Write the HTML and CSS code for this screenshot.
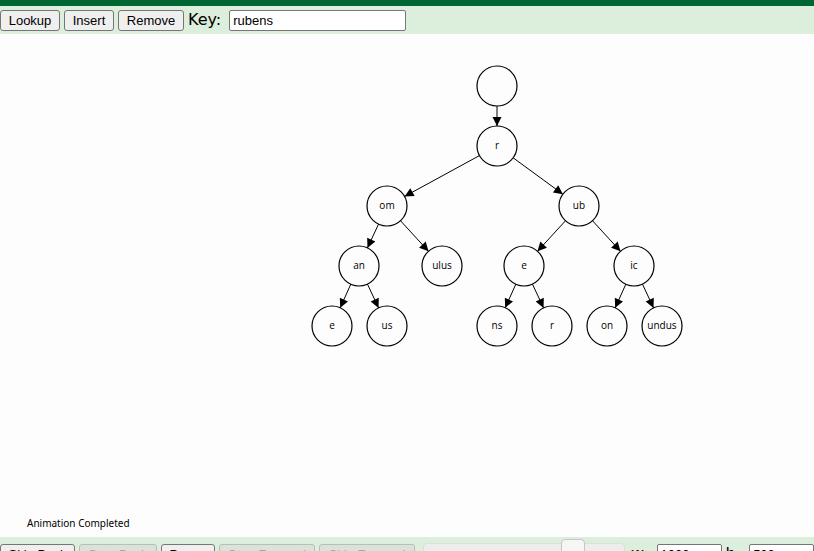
FILE: index.html
```html
<!DOCTYPE html>
<html lang="en">
<head>
<meta charset="utf-8">
<title>Radix Tree Visualization</title>
<link rel="stylesheet" href="styles.css">
</head>
<body>
<header class="bar bar-top">
  <button class="btn lookup" type="button">Lookup</button>
  <button class="btn insert" type="button">Insert</button>
  <button class="btn remove" type="button">Remove</button>
  <label for="key">Key:</label>
  <input class="field key" id="key" type="text" value="rubens">
</header>
<main class="stage">
  <svg class="canvas" width="1000" height="503" viewBox="0 34 1000 503" role="img" aria-label="Radix tree">
    <defs>
      <marker id="arrow" markerUnits="userSpaceOnUse" markerWidth="10" markerHeight="10" overflow="visible" orient="auto">
        <path d="M-20 0L-29-4.5V4.5Z"/>
      </marker>
    </defs>
    <g class="edges">
      <path d="M497 86V146"/>
      <path d="M497 146L387 206"/>
      <path d="M497 146L579 206"/>
      <path d="M387 206L359 266"/>
      <path d="M387 206L442 266"/>
      <path d="M579 206L524 266"/>
      <path d="M579 206L634 266"/>
      <path d="M359 266L332 326"/>
      <path d="M359 266L387 326"/>
      <path d="M524 266L497 326"/>
      <path d="M524 266L552 326"/>
      <path d="M634 266L607 326"/>
      <path d="M634 266L662 326"/>
    </g>
    <g class="nodes">
      <circle cx="497" cy="86" r="20"/>
      <circle cx="497" cy="146" r="20"/><text x="497" y="149">r</text>
      <circle cx="387" cy="206" r="20"/><text x="387" y="209">om</text>
      <circle cx="579" cy="206" r="20"/><text x="579" y="209">ub</text>
      <circle cx="359" cy="266" r="20"/><text x="359" y="269">an</text>
      <circle cx="442" cy="266" r="20"/><text x="442" y="269">ulus</text>
      <circle cx="524" cy="266" r="20"/><text x="524" y="269">e</text>
      <circle cx="634" cy="266" r="20"/><text x="634" y="269">ic</text>
      <circle cx="332" cy="326" r="20"/><text x="332" y="329">e</text>
      <circle cx="387" cy="326" r="20"/><text x="387" y="329">us</text>
      <circle cx="497" cy="326" r="20"/><text x="497" y="329">ns</text>
      <circle cx="552" cy="326" r="20"/><text x="552" y="329">r</text>
      <circle cx="607" cy="326" r="20"/><text x="607" y="329">on</text>
      <circle cx="662" cy="326" r="20"/><text x="662" y="329">undus</text>
    </g>
    <text class="status" x="27" y="527">Animation Completed</text>
  </svg>
</main>
<footer class="bar bar-bottom">
  <button class="btn skip-back" type="button">Skip Back</button>
  <button class="btn step-back" type="button" disabled>Step Back</button>
  <button class="btn pause" type="button">Pause</button>
  <button class="btn forward" type="button" disabled>Step Forward</button>
  <button class="btn forward" type="button" disabled>Skip Forward</button>
  <input class="speed" type="range" min="0" max="100" value="78" aria-label="Animation Speed">
  <label for="w">w:</label>
  <input class="field size" id="w" type="text" value="1000">
  <label for="h">h:</label>
  <input class="field size" id="h" type="text" value="500">
</footer>
</body>
</html>
```
FILE: styles.css
```css
* {
  box-sizing: border-box;
}

body {
  margin: 0;
  height: 100vh;
  overflow: hidden;
  background: #fdfdfd;
  color: #000;
  font: 16px/19px "DejaVu Sans", Verdana, sans-serif;
}

.bar {
  display: flex;
  align-items: center;
  gap: 4px;
  background: #dceedc;
}

.bar-top {
  border-top: 6px solid #006633;
  padding: 4px 0 3px;
}

.bar-bottom {
  padding: 7px 0;
}

label {
  padding: 0 4px 2px 0;
}

.btn {
  flex: none;
  height: 21px;
  padding: 0;
  border: 1px solid #767676;
  border-radius: 3px;
  background: #efefef;
  color: #000;
  font: 13px/15px "Liberation Sans", Arial, sans-serif;
}

.btn:disabled {
  border-color: #b6c0b6;
  background: #dae2da;
  color: #a2aaa2;
}

.lookup { width: 60px; }
.insert { width: 50px; }
.remove { width: 66px; }
.skip-back { width: 75px; }
.step-back { width: 78px; }
.pause { width: 54px; }
.forward { width: 96px; }

.field {
  flex: none;
  height: 21px;
  padding: 1px 3px;
  border: 1px solid #767676;
  border-radius: 2px;
  background: #fff;
  color: #000;
  font: 13px/15px "Liberation Sans", Arial, sans-serif;
}

.key { width: 177px; }
.size { width: 65px; }

.stage {
  overflow: hidden;
}

.canvas {
  display: block;
}

.edges path {
  stroke: #000;
  marker-end: url(#arrow);
}

.nodes circle {
  fill: #fdfdfd;
  stroke: #000;
  stroke-width: 1.2;
}

.nodes text {
  font: 10px "Open Sans", "Noto Sans", sans-serif;
  text-anchor: middle;
}

.status {
  font: 10px "Noto Sans", "Open Sans", sans-serif;
}

.speed {
  appearance: none;
  flex: none;
  align-self: flex-start;
  width: 202px;
  height: 14px;
  margin: -1px 2px 0 4px;
  border: 1px solid #dddddd;
  border-radius: 4px;
  background: #ededed;
}

.speed::-webkit-slider-thumb {
  appearance: none;
  width: 24px;
  height: 22px;
  border: 1px solid #c5c5c5;
  border-radius: 4px;
  background: #f6f6f6;
}
```
